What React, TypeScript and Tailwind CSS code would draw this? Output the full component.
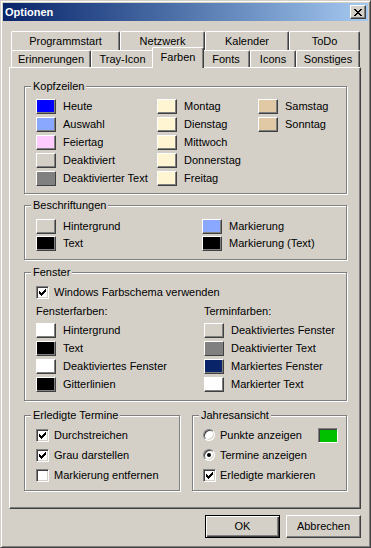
import React from "react";

type Item = { label: string; bg: string };

const BACK_TABS = [
  { label: "Programmstart", w: "w-[109px]" },
  { label: "Netzwerk", w: "w-[85px]" },
  { label: "Kalender", w: "w-[84px]" },
  { label: "ToDo", w: "w-[71px]" },
];

const FRONT_TABS = [
  { label: "Erinnerungen", w: "w-[80px]" },
  { label: "Tray-Icon", w: "w-[63px]" },
  { label: "Farben", w: "w-[52px]", selected: true },
  { label: "Fonts", w: "w-[48px]" },
  { label: "Icons", w: "w-[46px]" },
  { label: "Sonstiges", w: "w-[64px]" },
];

const kopfCols: Item[][] = [
  [
    { label: "Heute", bg: "bg-[#0000ff]" },
    { label: "Auswahl", bg: "bg-[#8aa8ff]" },
    { label: "Feiertag", bg: "bg-[#ffccff]" },
    { label: "Deaktiviert", bg: "bg-[#d4d0c8]" },
    { label: "Deaktivierter Text", bg: "bg-[#808080]" },
  ],
  [
    { label: "Montag", bg: "bg-[#fff5d3]" },
    { label: "Dienstag", bg: "bg-[#fff5d3]" },
    { label: "Mittwoch", bg: "bg-[#fff5d3]" },
    { label: "Donnerstag", bg: "bg-[#fff5d3]" },
    { label: "Freitag", bg: "bg-[#fff5d3]" },
  ],
  [
    { label: "Samstag", bg: "bg-[#e2c9a6]" },
    { label: "Sonntag", bg: "bg-[#e2c9a6]" },
  ],
];

const beschriftungen: Item[][] = [
  [
    { label: "Hintergrund", bg: "bg-[#d4d0c8]" },
    { label: "Text", bg: "bg-[#000000]" },
  ],
  [
    { label: "Markierung", bg: "bg-[#8aa8ff]" },
    { label: "Markierung (Text)", bg: "bg-[#000000]" },
  ],
];

const fensterfarben: Item[] = [
  { label: "Hintergrund", bg: "bg-[#ffffff]" },
  { label: "Text", bg: "bg-[#000000]" },
  { label: "Deaktiviertes Fenster", bg: "bg-[#ffffff]" },
  { label: "Gitterlinien", bg: "bg-[#000000]" },
];

const terminfarben: Item[] = [
  { label: "Deaktiviertes Fenster", bg: "bg-[#d4d0c8]" },
  { label: "Deaktivierter Text", bg: "bg-[#808080]" },
  { label: "Markiertes Fenster", bg: "bg-[#0a246a]" },
  { label: "Markierter Text", bg: "bg-[#ffffff]" },
];

// classic 7x7 check mark, one 3px column per x
const CHECK = [2, 3, 4, 3, 2, 1, 0];

const CheckMark = () => (
  <svg width="7" height="7" viewBox="0 0 7 7" shapeRendering="crispEdges">
    {CHECK.map((y, x) => (
      <rect key={x} x={x} y={y} width="1" height="3" fill="#000" />
    ))}
  </svg>
);

const CloseGlyph = () => (
  <svg width="8" height="7" viewBox="0 0 8 7" shapeRendering="crispEdges">
    <rect x="0" y="0" width="2" height="1" />
    <rect x="6" y="0" width="2" height="1" />
    <rect x="1" y="1" width="2" height="1" />
    <rect x="5" y="1" width="2" height="1" />
    <rect x="2" y="2" width="4" height="1" />
    <rect x="3" y="3" width="2" height="1" />
    <rect x="2" y="4" width="4" height="1" />
    <rect x="1" y="5" width="2" height="1" />
    <rect x="5" y="5" width="2" height="1" />
    <rect x="0" y="6" width="2" height="1" />
    <rect x="6" y="6" width="2" height="1" />
  </svg>
);

const Swatch = ({ bg }: { bg: string }) => (
  <div
    className={`w-[20px] h-[15px] shrink-0 border border-t-white border-l-white border-r-[#404040] border-b-[#404040] shadow-[inset_-1px_-1px_0_#808080] ${bg}`}
  />
);

const SwatchRow = ({ item }: { item: Item }) => (
  <div className="flex items-center gap-[7px] h-[15px]">
    <Swatch bg={item.bg} />
    <span className="leading-[13px] whitespace-nowrap">{item.label}</span>
  </div>
);

const Checkbox = ({ checked }: { checked?: boolean }) => (
  <div className="w-[13px] h-[13px] shrink-0 flex items-center justify-center bg-white border border-t-[#808080] border-l-[#808080] border-r-white border-b-white shadow-[inset_1px_1px_0_#404040,inset_-1px_-1px_0_#d4d0c8]">
    {checked && <CheckMark />}
  </div>
);

const Radio = ({ checked }: { checked?: boolean }) => (
  <div className="w-[12px] h-[12px] shrink-0 rounded-full flex items-center justify-center bg-white border border-t-[#808080] border-l-[#808080] border-r-white border-b-white shadow-[inset_1px_1px_0_#404040,inset_-1px_-1px_0_#d4d0c8]">
    {checked && <div className="w-[4px] h-[4px] rounded-full bg-black" />}
  </div>
);

const Group = ({
  title,
  className,
  children,
}: {
  title: string;
  className?: string;
  children: React.ReactNode;
}) => (
  <fieldset
    className={`border border-[#808080] shadow-[inset_1px_1px_0_#fff,1px_1px_0_#fff] ${className ?? ""}`}
  >
    <legend className="ml-[6px] px-[2px] bg-[#d4d0c8] leading-[13px]">{title}</legend>
    {children}
  </fieldset>
);

const tabBase =
  "flex items-center justify-center bg-[#d4d0c8] border-l border-t border-white border-r border-r-[#404040] rounded-t-[2px] shadow-[inset_-1px_0_0_#808080] whitespace-nowrap";

export default function App() {
  return (
    <div className="w-[371px] h-[548px] p-[2px] bg-[#d4d0c8] text-[11px] text-black font-['Liberation_Sans',Arial,sans-serif] border border-t-[#d4d0c8] border-l-[#d4d0c8] border-r-[#404040] border-b-[#404040] shadow-[inset_1px_1px_0_#fff,inset_-1px_-1px_0_#808080]">
      {/* Title bar */}
      <div className="h-[18px] flex items-center justify-between pl-[2px] pr-[2px] bg-linear-to-r from-[#0a246a] to-[#a6caf0]">
        <span className="text-white font-bold leading-[13px]">Optionen</span>
        <div className="w-[16px] h-[14px] flex items-center justify-center bg-[#d4d0c8] border border-t-white border-l-white border-r-[#404040] border-b-[#404040] shadow-[inset_-1px_-1px_0_#808080]">
          <CloseGlyph />
        </div>
      </div>

      <div className="ml-[6px] mt-[10px] w-[352px]">
        {/* Tabs */}
        <div className="flex ml-[2px] h-[19px]">
          {BACK_TABS.map((t) => (
            <div key={t.label} className={`${tabBase} ${t.w} h-[19px]`}>
              {t.label}
            </div>
          ))}
        </div>
        <div className="flex ml-[2px] h-[17px]">
          {FRONT_TABS.map((t) =>
            t.selected ? (
              <div
                key={t.label}
                className={`${tabBase} ${t.w} relative z-10 -mx-[2px] -mt-[3px] -mb-[1px] h-[21px] pb-[1px]`}
              >
                {t.label}
              </div>
            ) : (
              <div key={t.label} className={`${tabBase} ${t.w} h-[17px]`}>
                {t.label}
              </div>
            )
          )}
        </div>

        {/* Panel */}
        <div className="h-[442px] pt-[12px] pl-[14px] pr-[13px] bg-[#d4d0c8] border border-t-white border-l-white border-r-[#404040] border-b-[#404040] shadow-[inset_-1px_-1px_0_#808080]">
          <Group title="Kopfzeilen">
            <div className="flex pl-[11px] pt-[6px] pb-[7px]">
              {kopfCols.map((col, i) => (
                <div
                  key={i}
                  className={`flex flex-col gap-[3px] ${i === 0 ? "w-[121px]" : i === 1 ? "w-[101px]" : ""}`}
                >
                  {col.map((it) => (
                    <SwatchRow key={it.label} item={it} />
                  ))}
                </div>
              ))}
            </div>
          </Group>

          <Group title="Beschriftungen" className="mt-[5px]">
            <div className="grid grid-cols-[166px_1fr] pl-[11px] pt-[7px] pb-[8px]">
              {beschriftungen.map((col, i) => (
                <div key={i} className="flex flex-col gap-[2px]">
                  {col.map((it) => (
                    <SwatchRow key={it.label} item={it} />
                  ))}
                </div>
              ))}
            </div>
          </Group>

          <Group title="Fenster" className="mt-[6px]">
            <div className="pl-[11px] pt-[5px] pb-[8px]">
              <div className="flex items-center gap-[5px] h-[17px]">
                <Checkbox checked />
                <span className="leading-[13px]">Windows Farbschema verwenden</span>
              </div>
              <div className="grid grid-cols-[168px_1fr] mt-[4px]">
                <div>
                  <div className="leading-[13px]">Fensterfarben:</div>
                  <div className="flex flex-col gap-[3px] mt-[5px]">
                    {fensterfarben.map((it) => (
                      <SwatchRow key={it.label} item={it} />
                    ))}
                  </div>
                </div>
                <div>
                  <div className="leading-[13px]">Terminfarben:</div>
                  <div className="flex flex-col gap-[3px] mt-[5px]">
                    {terminfarben.map((it) => (
                      <SwatchRow key={it.label} item={it} />
                    ))}
                  </div>
                </div>
              </div>
            </div>
          </Group>

          <div className="grid grid-cols-[156px_155px] gap-[12px] mt-[8px]">
            <Group title="Erledigte Termine">
              <div className="pl-[11px] pt-[3px] pb-[5px]">
                {[
                  { label: "Durchstreichen", checked: true },
                  { label: "Grau darstellen", checked: true },
                  { label: "Markierung entfernen", checked: false },
                ].map((c) => (
                  <div key={c.label} className="flex items-center gap-[5px] h-[20px]">
                    <Checkbox checked={c.checked} />
                    <span className="leading-[13px] whitespace-nowrap">{c.label}</span>
                  </div>
                ))}
              </div>
            </Group>

            <Group title="Jahresansicht">
              <div className="pl-[10px] pr-[8px] pt-[3px] pb-[5px]">
                <div className="flex items-center h-[20px]">
                  <Radio />
                  <span className="ml-[5px] leading-[13px] whitespace-nowrap">Punkte anzeigen</span>
                  <div className="ml-auto w-[20px] h-[15px] bg-[#00c000] border border-t-[#808080] border-l-[#808080] border-r-white border-b-white shadow-[inset_1px_1px_0_#404040]" />
                </div>
                <div className="flex items-center h-[20px]">
                  <Radio checked />
                  <span className="ml-[5px] leading-[13px] whitespace-nowrap">Termine anzeigen</span>
                </div>
                <div className="flex items-center gap-[4px] h-[20px]">
                  <Checkbox checked />
                  <span className="leading-[13px] whitespace-nowrap">Erledigte markieren</span>
                </div>
              </div>
            </Group>
          </div>
        </div>

        {/* Buttons */}
        <div className="flex justify-end gap-[6px] mt-[6px]">
          <button
            type="button"
            className="w-[75px] h-[23px] bg-[#d4d0c8] border border-black shadow-[inset_1px_1px_0_#fff,inset_-1px_-1px_0_#404040,inset_-2px_-2px_0_#808080]"
          >
            OK
          </button>
          <button
            type="button"
            className="w-[75px] h-[23px] bg-[#d4d0c8] border border-t-white border-l-white border-r-[#404040] border-b-[#404040] shadow-[inset_-1px_-1px_0_#808080]"
          >
            Abbrechen
          </button>
        </div>
      </div>
    </div>
  );
}
